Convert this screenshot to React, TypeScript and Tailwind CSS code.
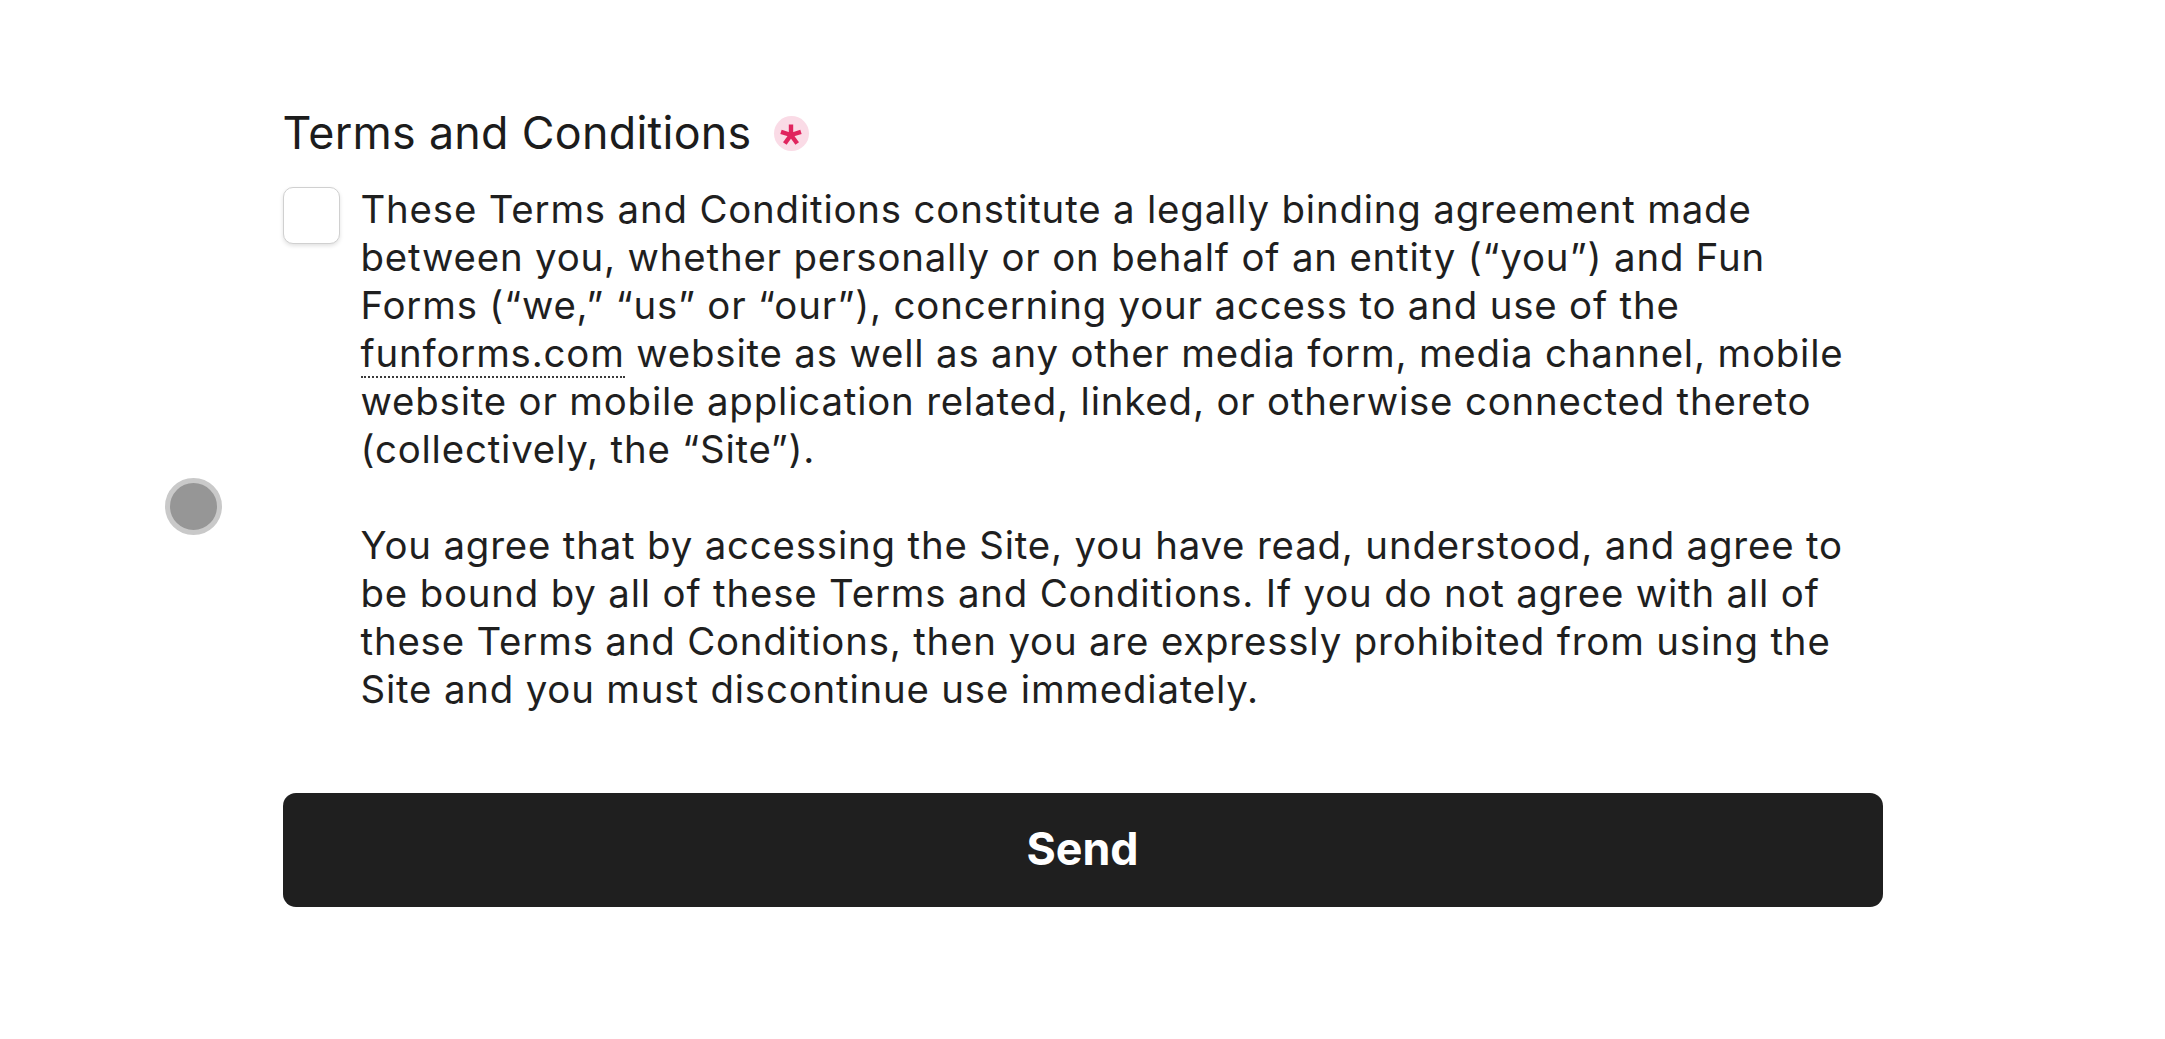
import { useState } from "react"

function RequiredMark() {
  return (
    <span className="ml-[22px] inline-flex h-[35px] w-[35px] items-center justify-center rounded-full bg-[#fadbe6]">
      <svg viewBox="-12 -12 24 24" className="h-[24px] w-[24px] translate-y-[1px]" aria-label="required">
        <g stroke="#e0245e" strokeWidth="4.4" strokeLinecap="butt">
          <line x1="0" y1="0" x2="0" y2="-10.5" />
          <line x1="0" y1="0" x2="10" y2="-3.2" />
          <line x1="0" y1="0" x2="-10" y2="-3.2" />
          <line x1="0" y1="0" x2="6.2" y2="8.5" />
          <line x1="0" y1="0" x2="-6.2" y2="8.5" />
        </g>
      </svg>
    </span>
  )
}

export default function App() {
  const [agreed, setAgreed] = useState(false)

  return (
    <div className="relative min-h-screen bg-white font-[Inter,sans-serif] text-[#1f1f1f]">
      <div className="mx-auto w-[1600px] pt-[107px]">
        <h2 className="flex items-center text-[44.8px] font-normal leading-[1.2] tracking-[0.3px] text-[#1c1c1c]">
          Terms and Conditions
          <RequiredMark />
        </h2>

        <div className="mt-[26px] flex items-start gap-[21px]">
          <button
            type="button"
            aria-pressed={agreed}
            onClick={() => setAgreed((v) => !v)}
            className="h-[57px] w-[57px] shrink-0 rounded-[10px] border-[1.5px] border-[#d0d0d0] bg-white shadow-[0_2px_4px_rgba(0,0,0,0.12)]"
          />
          <div className="-mt-[2px] pr-[22px] text-[38.4px] leading-[48px] tracking-[0.82px] text-[#1f1f1f]">
            <p>
              These Terms and Conditions constitute a legally binding agreement made between you, whether
              personally or on behalf of an entity (“you”) and Fun Forms (“we,” “us” or “our”), concerning your
              access to and use of the{" "}
              <span className="border-b-2 border-dotted border-[#3a3a3a]">funforms.com</span> website as well as
              any other media form, media channel, mobile website or mobile application related, linked, or
              otherwise connected thereto (collectively, the “Site”).
            </p>
            <p className="mt-[48px]">
              You agree that by accessing the Site, you have read, understood, and agree to be bound by all of
              these Terms and Conditions. If you do not agree with all of these Terms and Conditions, then you are
              expressly prohibited from using the Site and you must discontinue use immediately.
            </p>
          </div>
        </div>

        <button
          type="button"
          className="mt-[80px] flex h-[114px] w-full items-center justify-center rounded-[13px] bg-[#1f1f1f] text-[44.8px] font-bold text-white"
        >
          Send
        </button>
      </div>

      {/* touch pointer indicator */}
      <div className="pointer-events-none absolute left-[165px] top-[478px] h-[57px] w-[57px] rounded-full border-[5px] border-[#c9c9c9] bg-[#969696]" />
    </div>
  )
}
